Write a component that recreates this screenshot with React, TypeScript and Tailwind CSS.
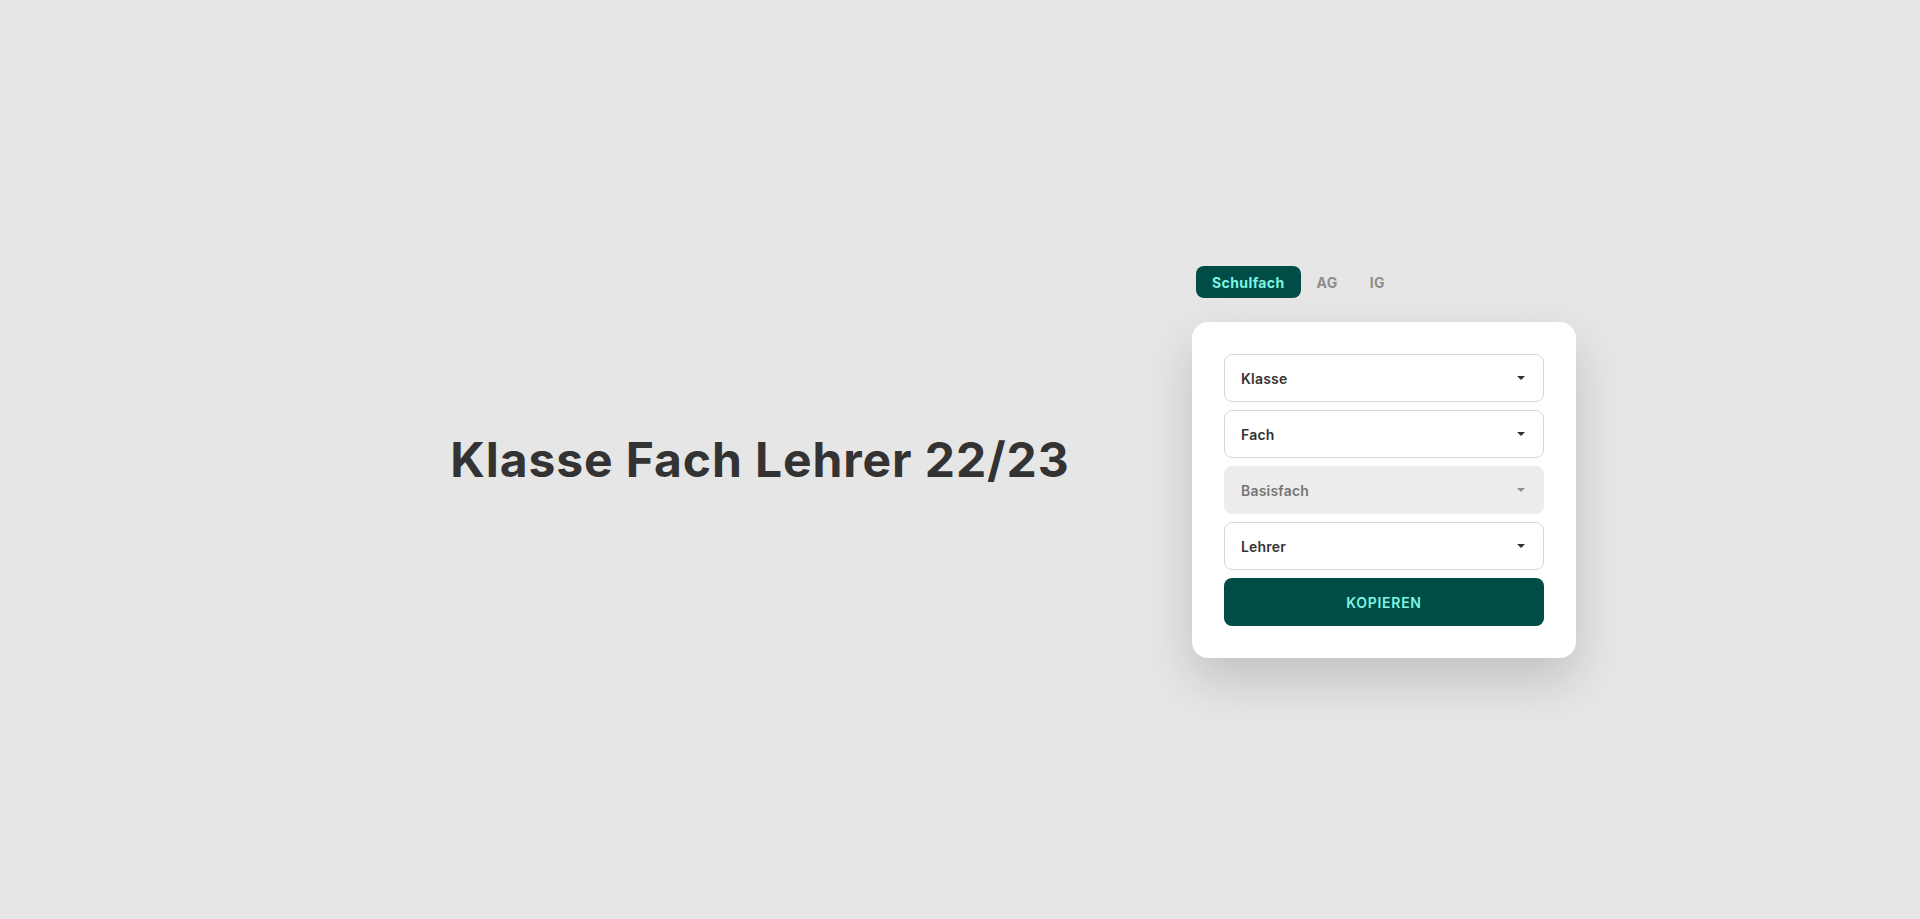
import React from "react";

const Caret = ({ muted }: { muted?: boolean }) => (
  <svg width="8" height="4" viewBox="0 0 8 4" className={muted ? "text-[#8f8f8f]" : "text-[#333333]"}>
    <path d="M0 0 L8 0 L4 4 Z" fill="currentColor" />
  </svg>
);

const Select = ({ label, disabled }: { label: string; disabled?: boolean }) => (
  <div
    className={
      disabled
        ? "flex h-12 w-full items-center justify-between rounded-lg border border-[#ededed] bg-[#ededed] pl-4 pr-[18px] text-[14px] font-semibold tracking-[0.2px] text-[#757575]"
        : "flex h-12 w-full items-center justify-between rounded-lg border border-[#d6d6d6] bg-white pl-4 pr-[18px] text-[14px] font-semibold tracking-[0.2px] text-[#333333]"
    }
  >
    <span>{label}</span>
    <Caret muted={disabled} />
  </div>
);

export default function App() {
  return (
    <div
      className="flex h-[919px] w-full items-center bg-[#e6e6e6]"
      style={{ fontFamily: "Inter, 'Noto Sans', sans-serif" }}
    >
      <div className="ml-[410px] flex w-[700px] justify-center">
        <h1 className="text-[48px] font-bold leading-none tracking-[0.9px] text-[#333333]">
          Klasse Fach Lehrer 22/23
        </h1>
      </div>
      <div className="ml-[82px] mt-[5px] flex w-[384px] flex-col">
        <div className="ml-1 flex h-8 items-center text-[14px] font-bold tracking-[0.4px]">
          <div className="flex h-8 items-center rounded-lg bg-[#004d47] px-4 text-[#7ff5e2]">Schulfach</div>
          <div className="flex h-8 items-center px-4 text-[#8c8c8c]">AG</div>
          <div className="flex h-8 items-center px-4 text-[#8c8c8c]">IG</div>
        </div>
        <div className="mt-6 flex flex-col gap-2 rounded-2xl bg-white p-8 shadow-[0_22px_50px_rgba(0,0,0,0.16)]">
          <Select label="Klasse" />
          <Select label="Fach" />
          <Select label="Basisfach" disabled />
          <Select label="Lehrer" />
          <button className="flex h-12 w-full items-center justify-center rounded-lg bg-[#004d47] text-[14px] font-semibold tracking-[0.7px] text-[#7ff5e2]">
            KOPIEREN
          </button>
        </div>
      </div>
    </div>
  );
}
